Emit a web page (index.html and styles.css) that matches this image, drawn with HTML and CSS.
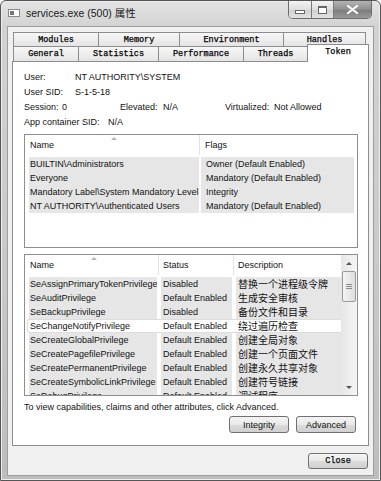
FILE: index.html
```html
<!DOCTYPE html>
<html lang="zh-CN">
<head>
  <meta charset="UTF-8" />
  <title>services.exe (500) 属性</title>
  <link rel="stylesheet" href="styles.css">
</head>
<body>

<div class="window">
  <div class="titlebar">
    <span class="app-icon"><span class="app-icon-bar"></span></span>
    <span class="title">services.exe (500) 属性</span>
    <div class="controls">
      <span class="ctl ctl-min"><span class="glyph-min"></span></span>
      <span class="ctl ctl-max"><span class="glyph-max"></span></span>
      <span class="ctl ctl-close">
        <svg width="11" height="9" viewBox="0 0 11 9"><path d="M1 1 L10 8 M10 1 L1 8" stroke="#fff" stroke-width="2.2" stroke-linecap="round"/></svg>
      </span>
    </div>
  </div>

  <div class="client">
    <div class="tabs">
      <div class="tab-row tab-row-top">
        <div class="tab" style="width:86px">Modules</div>
        <div class="tab" style="width:82px">Memory</div>
        <div class="tab" style="width:105px">Environment</div>
        <div class="tab" style="width:83px">Handles</div>
      </div>
      <div class="tab-row tab-row-bottom">
        <div class="tab" style="width:66px">General</div>
        <div class="tab" style="width:81px">Statistics</div>
        <div class="tab" style="width:86px">Performance</div>
        <div class="tab" style="width:65px">Threads</div>
        <div class="tab tab-active" style="width:62px">Token</div>
      </div>
    </div>

    <div class="panel">
      <div class="info">
        <div class="info-row"><span class="k k-user">User:</span><span>NT AUTHORITY\SYSTEM</span></div>
        <div class="info-row"><span class="k k-user">User SID:</span><span>S-1-5-18</span></div>
        <div class="info-row">
          <span class="pair pair-session"><span class="k k-session">Session:</span>0</span>
          <span class="pair pair-elevated"><span class="k k-elevated">Elevated:</span>N/A</span>
          <span class="pair"><span class="k k-virt">Virtualized:</span>Not Allowed</span>
        </div>
        <div class="info-row"><span class="k k-app">App container SID:</span><span>N/A</span></div>
      </div>

      <div class="list list-groups">
        <div class="list-main">
          <div class="list-head">
            <div class="head-cell g-name"><span class="sort-caret"></span>Name</div>
            <div class="head-cell g-flags">Flags</div>
          </div>
          <div class="list-body">
            <div class="row row-groups"><span class="cell c-gname">BUILTIN\Administrators</span><span class="cell c-gflags">Owner (Default Enabled)</span></div>
            <div class="row row-groups"><span class="cell c-gname">Everyone</span><span class="cell c-gflags">Mandatory (Default Enabled)</span></div>
            <div class="row row-groups"><span class="cell c-gname">Mandatory Label\System Mandatory Level</span><span class="cell c-gflags">Integrity</span></div>
            <div class="row row-groups"><span class="cell c-gname">NT AUTHORITY\Authenticated Users</span><span class="cell c-gflags">Mandatory (Default Enabled)</span></div>
          </div>
        </div>
      </div>

      <div class="list list-privs">
        <div class="list-main">
          <div class="list-head">
            <div class="head-cell p-name"><span class="sort-caret"></span>Name</div>
            <div class="head-cell p-status">Status</div>
            <div class="head-cell p-desc">Description</div>
          </div>
          <div class="list-body">
            <div class="row row-privs"><span class="cell c-pname">SeAssignPrimaryTokenPrivilege</span><span class="cell c-pstatus">Disabled</span><span class="cell c-pdesc">替换一个进程级令牌</span></div>
            <div class="row row-privs"><span class="cell c-pname">SeAuditPrivilege</span><span class="cell c-pstatus">Default Enabled</span><span class="cell c-pdesc">生成安全审核</span></div>
            <div class="row row-privs"><span class="cell c-pname">SeBackupPrivilege</span><span class="cell c-pstatus">Disabled</span><span class="cell c-pdesc">备份文件和目录</span></div>
            <div class="row row-privs row-hot"><span class="cell c-pname">SeChangeNotifyPrivilege</span><span class="cell c-pstatus">Default Enabled</span><span class="cell c-pdesc">绕过遍历检查</span></div>
            <div class="row row-privs"><span class="cell c-pname">SeCreateGlobalPrivilege</span><span class="cell c-pstatus">Default Enabled</span><span class="cell c-pdesc">创建全局对象</span></div>
            <div class="row row-privs"><span class="cell c-pname">SeCreatePagefilePrivilege</span><span class="cell c-pstatus">Default Enabled</span><span class="cell c-pdesc">创建一个页面文件</span></div>
            <div class="row row-privs"><span class="cell c-pname">SeCreatePermanentPrivilege</span><span class="cell c-pstatus">Default Enabled</span><span class="cell c-pdesc">创建永久共享对象</span></div>
            <div class="row row-privs"><span class="cell c-pname">SeCreateSymbolicLinkPrivilege</span><span class="cell c-pstatus">Default Enabled</span><span class="cell c-pdesc">创建符号链接</span></div>
            <div class="row row-privs"><span class="cell c-pname">SeDebugPrivilege</span><span class="cell c-pstatus">Default Enabled</span><span class="cell c-pdesc">调试程序</span></div>
          </div>
        </div>
        <div class="scrollbar">
          <div class="sb-btn"><span class="arrow-up"></span></div>
          <div class="sb-track">
            <div class="sb-thumb"><span class="grip"></span><span class="grip"></span><span class="grip"></span></div>
          </div>
          <div class="sb-btn"><span class="arrow-down"></span></div>
        </div>
      </div>

      <p class="hint">To view capabilities, claims and other attributes, click Advanced.</p>

      <div class="actions">
        <button class="btn">Integrity</button>
        <button class="btn">Advanced</button>
      </div>
    </div>

    <div class="footer">
      <button class="btn btn-close">Close</button>
    </div>
  </div>
</div>

</body>
</html>
```

FILE: styles.css
```css
* {
  box-sizing: border-box;
}
html, body {
  margin: 0;
  padding: 0;
}
body {
  width: 381px;
  height: 481px;
  overflow: hidden;
  background: #fff;
  font-family: "Liberation Sans", Arial, "Noto Sans CJK SC", sans-serif;
  font-size: 9px;
  color: #111;
}

/* window frame */
.window {
  width: 381px;
  height: 481px;
  border: 1px solid #555;
  border-radius: 6px 6px 0 0;
  background: linear-gradient(#e4e4e4, #d2d2d2 26px, #c8c8c8 60%, #bdbdbd);
  box-shadow: inset 0 0 0 1px #eee;
  padding: 0 6px 4px 6px;
  display: flex;
  flex-direction: column;
}
.titlebar {
  height: 25px;
  display: flex;
  align-items: flex-start;
  flex-shrink: 0;
}
.app-icon {
  width: 12px;
  height: 8px;
  margin: 8px 0 0 1px;
  border: 1px solid #888;
  background: #fff;
}
.app-icon-bar {
  display: block;
  width: 4px;
  height: 4px;
  margin: 1px;
  background: #777;
}
.title {
  margin: 5px 0 0 6px;
  font-size: 10.5px;
  line-height: 14px;
  color: #1a1a1a;
}
.controls {
  margin-left: auto;
  margin-right: 2px;
  display: flex;
  height: 18px;
  border: 1px solid #6d6d6d;
  border-top: none;
  border-radius: 0 0 5px 5px;
  overflow: hidden;
}
.ctl {
  display: flex;
  align-items: center;
  justify-content: center;
  height: 17px;
  background: linear-gradient(#f4f4f4, #dedede 50%, #cfcfcf 51%, #e2e2e2);
}
.ctl-min {
  width: 23px;
  border-right: 1px solid #7a7a7a;
}
.ctl-max {
  width: 22px;
  border-right: 1px solid #7a7a7a;
}
.ctl-close {
  width: 37px;
  background: linear-gradient(#b4b4b4, #8e8e8e 50%, #7a7a7a 51%, #9a9a9a);
}
.glyph-min {
  width: 10px;
  height: 4px;
  margin-top: 5px;
  border: 1px solid #666;
  background: #fff;
}
.glyph-max {
  width: 9px;
  height: 8px;
  border: 1px solid #666;
  border-top-width: 2px;
  background: #fff;
}

/* client area */
.client {
  flex: 1;
  border: 1px solid #9d9d9d;
  background: #f0f0f0;
  padding: 5px 4px 0 4px;
  display: flex;
  flex-direction: column;
}
.tabs {
  padding-left: 1px;
}
.tab-row {
  display: flex;
  align-items: flex-start;
  height: 15px;
}
.tab-row-bottom {
  margin-top: -1px;
}
.tab {
  height: 15px;
  margin-right: -1px;
  border: 1px solid #8d8d8d;
  background: linear-gradient(#f7f7f7, #e4e4e4);
  font-family: "Liberation Mono", "Courier New", monospace;
  font-size: 8.5px;
  line-height: 14px;
  text-align: center;
  color: #000;
  -webkit-text-stroke: 0.25px #000;
}
.tab-row-bottom .tab {
  border-bottom: none;
}
.tab-active {
  position: relative;
  z-index: 1;
  height: 18px;
  margin-top: -2px;
  background: #fff;
  line-height: 14px;
}

.panel {
  height: 385px;
  border: 1px solid #8d8d8d;
  background: #fff;
  padding: 8px 10px 0 11px;
}

.info-row {
  display: flex;
  height: 15px;
  line-height: 15px;
  white-space: nowrap;
}
.k {
  display: inline-block;
}
.k-user { width: 51px; }
.k-session { width: 38px; }
.k-elevated { width: 43px; }
.k-virt { width: 49px; }
.k-app { width: 84px; }
.pair-session { width: 96px; }
.pair-elevated { width: 105px; }

/* list views */
.list {
  display: flex;
  border: 1px solid #8e8e8e;
  background: #fff;
  overflow: hidden;
}
.list-groups {
  margin-top: 4px;
  height: 114px;
}
.list-privs {
  margin-top: 6px;
  height: 142px;
}
.list-main {
  flex: 1;
  min-width: 0;
  display: flex;
  flex-direction: column;
}
.list-head {
  display: flex;
  height: 20px;
  flex-shrink: 0;
}
.head-cell {
  position: relative;
  height: 20px;
  line-height: 21px;
  padding-left: 5px;
  border-right: 1px solid #e2e2e2;
  white-space: nowrap;
}
.g-name { width: 175px; }
.g-flags { flex: 1; border-right: none; }
.p-name { width: 134px; }
.p-status { width: 75px; padding-left: 4px; }
.p-desc { flex: 1; padding-left: 4px; border-right: none; }
.sort-caret {
  position: absolute;
  top: 2px;
  left: 50%;
  width: 0;
  height: 0;
  margin-left: -1px;
  border-left: 3px solid transparent;
  border-right: 3px solid transparent;
  border-bottom: 3px solid #b4b4b4;
}

.list-body {
  flex: 1;
  padding: 2px 0 0 4px;
  overflow: hidden;
}
.row {
  display: grid;
  height: 14px;
  line-height: 14px;
  white-space: nowrap;
}
.row-groups {
  grid-template-columns: 170px 153px;
  column-gap: 2px;
}
.row-privs {
  grid-template-columns: 128px 71px 105px;
  column-gap: 4px;
}
.cell {
  background: #e6e6e6;
  overflow: hidden;
}
.c-gname, .c-pname { padding-left: 1px; }
.c-gflags { padding-left: 5px; }
.c-pstatus, .c-pdesc { padding-left: 2px; }
.c-pdesc {
  font-family: "Noto Sans CJK SC", sans-serif;
  font-size: 10px;
  overflow: visible;
}
.row-hot {
  margin-left: -2px;
  padding-left: 1px;
  width: 315px;
  background: #fff;
  border: 1px solid #dcdcdc;
  border-radius: 2px;
  line-height: 12px;
}
.row-hot .cell {
  background: transparent;
}

/* scrollbar */
.scrollbar {
  width: 16px;
  display: flex;
  flex-direction: column;
  background: linear-gradient(90deg, #e6e6e6, #f6f6f6);
}
.sb-btn {
  height: 16px;
  display: flex;
  align-items: center;
  justify-content: center;
}
.sb-track {
  flex: 1;
}
.sb-thumb {
  height: 31px;
  margin: 0 1px;
  border: 1px solid #9a9a9a;
  border-radius: 2px;
  background: linear-gradient(90deg, #f3f3f3, #dedede);
  display: flex;
  flex-direction: column;
  align-items: center;
  justify-content: center;
  gap: 1px;
}
.grip {
  width: 6px;
  height: 1px;
  background: #8a8a8a;
}
.arrow-up, .arrow-down {
  width: 0;
  height: 0;
  border-left: 3px solid transparent;
  border-right: 3px solid transparent;
}
.arrow-up { border-bottom: 3px solid #555; }
.arrow-down { border-top: 3px solid #555; }

.hint {
  margin: 4px 0 0 0;
  line-height: 14px;
  white-space: nowrap;
}

/* buttons */
.actions {
  display: flex;
  justify-content: flex-end;
  gap: 7px;
  margin: 2px 2px 0 0;
}
.btn {
  width: 60px;
  height: 17px;
  padding: 0;
  border: 1px solid #707070;
  border-radius: 3px;
  background: linear-gradient(#f4f4f4, #e9e9e9 50%, #dcdcdc 51%, #d0d0d0);
  font-family: "Liberation Sans", Arial, sans-serif;
  font-size: 9px;
  color: #111;
}
.footer {
  display: flex;
  justify-content: flex-end;
  padding: 7px 1px 0 0;
}
.btn-close {
  height: 16px;
  font-family: "Liberation Mono", "Courier New", monospace;
  font-size: 8.5px;
  -webkit-text-stroke: 0.25px #000;
}
```
